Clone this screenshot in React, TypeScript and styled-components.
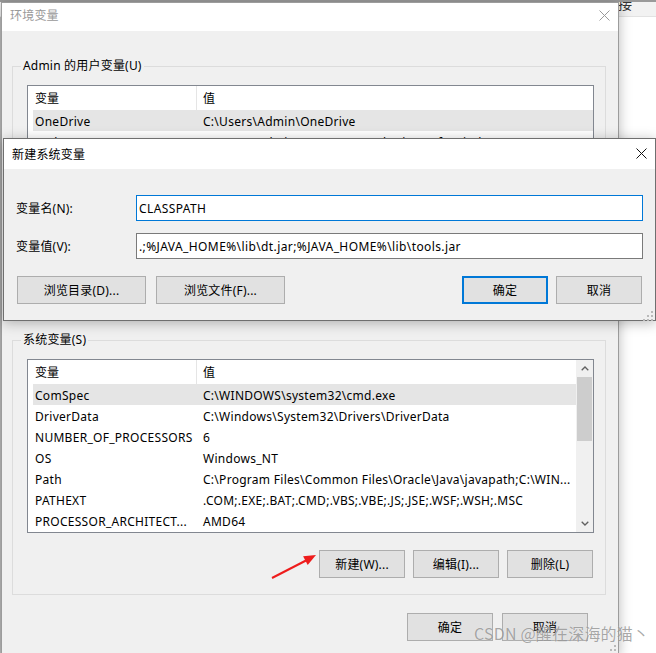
import React from "react";
import styled, { createGlobalStyle } from "styled-components";

const GlobalStyle = createGlobalStyle`
  html, body { margin: 0; padding: 0; background: #ffffff; }
  body {
    font-family: "Noto Sans", "Noto Sans CJK SC", sans-serif;
    font-size: 12px;
    color: #000;
  }
  * { box-sizing: border-box; }
`;

const Desktop = styled.div`
  position: relative;
  width: 656px;
  height: 653px;
  overflow: hidden;
  background: linear-gradient(to right, #bdbdbd 0 1px, #ffffff 1px);
`;

const BackTopBar = styled.div`
  height: 17px;
  background: #f2f2f2;
  border-top: 2px solid #9a9a9a;
  border-bottom: 1px solid #e2e2e2;
  display: flex;
  padding-left: 618px;
  overflow: hidden;
`;

const BackText = styled.span`
  font-family: "Noto Sans CJK SC", sans-serif;
  font-size: 14px;
  line-height: 14px;
  margin-top: -6px;
  color: #333;
`;

const Window = styled.div<{ $left: number; $top: number; $width: number; $height: number; $active?: boolean }>`
  position: absolute;
  left: ${(p) => p.$left}px;
  top: ${(p) => p.$top}px;
  width: ${(p) => p.$width}px;
  height: ${(p) => p.$height}px;
  display: flex;
  flex-direction: column;
  background: #f0f0f0;
  border: 1px solid ${(p) => (p.$active ? "#6f6f6f" : "#9c9c9c")};
  box-shadow: 0 2px 12px rgba(0, 0, 0, 0.28);
`;

const TitleBar = styled.div<{ $height: number }>`
  height: ${(p) => p.$height}px;
  flex-shrink: 0;
  background: #ffffff;
  display: flex;
  align-items: stretch;
  padding-left: 8px;
`;

const TitleText = styled.div<{ $active?: boolean; $lift: number }>`
  flex: 1;
  display: flex;
  align-items: center;
  padding-bottom: ${(p) => p.$lift}px;
  font-family: "Noto Sans CJK SC", sans-serif;
  font-size: 12px;
  letter-spacing: 0.2px;
  color: ${(p) => (p.$active ? "#000" : "#999")};
`;

const CloseButton = styled.div<{ $top: number }>`
  width: 28px;
  flex-shrink: 0;
  display: flex;
  justify-content: center;
  align-items: flex-start;
  padding-top: ${(p) => p.$top}px;
`;

const CloseIcon = ({ color }: { color: string }) => (
  <svg width="11" height="11" viewBox="0 0 11 11">
    <path d="M0.5 0.5 L10.5 10.5 M10.5 0.5 L0.5 10.5" stroke={color} strokeWidth="1" fill="none" />
  </svg>
);

const Grip = styled.div`
  position: absolute;
  right: 2px;
  bottom: 2px;
  width: 10px;
  height: 10px;
`;

const GripIcon = () => (
  <svg width="10" height="10" viewBox="0 0 10 10">
    {[
      [8, 0],
      [8, 4],
      [4, 4],
      [8, 8],
      [4, 8],
      [0, 8],
    ].map(([x, y], i) => (
      <rect key={i} x={x} y={y} width="2" height="2" fill="#b9b9b9" />
    ))}
  </svg>
);

const OuterBody = styled.div`
  flex: 1;
  display: flex;
  flex-direction: column;
  padding: 27px 12px 0 10px;
`;

const Group = styled.fieldset<{ $gapTop?: number }>`
  margin: ${(p) => p.$gapTop ?? 0}px 0 0 0;
  padding: 11px 11px 16px 14px;
  border: 1px solid #dcdcdc;
  min-width: 0;
  display: flex;
  flex-direction: column;
`;

const Legend = styled.legend`
  padding: 0 2px;
  margin-left: -6px;
  font-size: 12px;
  line-height: 16px;
  letter-spacing: 0.2px;
`;

const ListBox = styled.div<{ $height: number }>`
  display: flex;
  height: ${(p) => p.$height}px;
  flex-shrink: 0;
  border: 1px solid #828790;
  background: #ffffff;
  overflow: hidden;
`;

const ListContent = styled.div`
  flex: 1;
  min-width: 0;
  padding-left: 5px;
  display: flex;
  flex-direction: column;
  overflow: hidden;
`;

const HeaderRow = styled.div`
  display: grid;
  grid-template-columns: 163px 379px;
  height: 24px;
  flex-shrink: 0;
`;

const HeaderCell = styled.div<{ $divider?: boolean }>`
  display: flex;
  align-items: center;
  padding-left: ${(p) => (p.$divider ? 6 : 2)}px;
  border-left: ${(p) => (p.$divider ? "1px solid #e5e5e5" : "none")};
  white-space: nowrap;
`;

const DataRow = styled.div<{ $selected?: boolean }>`
  display: grid;
  grid-template-columns: 163px 379px;
  height: 21px;
  flex-shrink: 0;
  background: ${(p) => (p.$selected ? "#e5e5e5" : "transparent")};
`;

const Cell = styled.div<{ $value?: boolean }>`
  display: flex;
  align-items: center;
  padding-left: ${(p) => (p.$value ? 7 : 2)}px;
  padding-top: 1px;
  white-space: nowrap;
  overflow: hidden;
  letter-spacing: 0.28px;
`;

const ScrollBar = styled.div`
  width: 17px;
  flex-shrink: 0;
  background: #f0f0f0;
  display: flex;
  flex-direction: column;
`;

const ScrollArrow = styled.div`
  height: 17px;
  flex-shrink: 0;
  display: flex;
  align-items: center;
  justify-content: center;
`;

const ScrollTrack = styled.div`
  flex: 1;
  padding: 0 1px;
`;

const ScrollThumb = styled.div`
  height: 64px;
  background: #cdcdcd;
`;

const Chevron = ({ down }: { down?: boolean }) => (
  <svg width="8" height="5" viewBox="0 0 8 5">
    <path
      d={down ? "M0.7 0.7 L4 4 L7.3 0.7" : "M0.7 4.3 L4 1 L7.3 4.3"}
      stroke="#606060"
      strokeWidth="1.3"
      fill="none"
    />
  </svg>
);

const ButtonRow = styled.div<{ $top: number; $right: number; $gap: number }>`
  display: flex;
  justify-content: flex-end;
  gap: ${(p) => p.$gap}px;
  margin-top: ${(p) => p.$top}px;
  padding-right: ${(p) => p.$right}px;
  flex-shrink: 0;
`;

const Button = styled.div<{ $width: number; $default?: boolean }>`
  width: ${(p) => p.$width}px;
  height: 28px;
  flex-shrink: 0;
  display: flex;
  align-items: center;
  justify-content: center;
  background: #e1e1e1;
  border: ${(p) => (p.$default ? "2px solid #0078d7" : "1px solid #adadad")};
  font-size: 12px;
  letter-spacing: 0.2px;
  color: #000;
  white-space: nowrap;
`;

const DialogBody = styled.div`
  flex: 1;
  display: flex;
  flex-direction: column;
  padding: 26px 12px 0 12px;
`;

const FieldRow = styled.div<{ $top: number }>`
  display: grid;
  grid-template-columns: 120px 1fr;
  align-items: center;
  height: 26px;
  margin-top: ${(p) => p.$top}px;
`;

const FieldLabel = styled.div`
  font-size: 12px;
  letter-spacing: 0.2px;
  white-space: nowrap;
`;

const TextBox = styled.input<{ $focused?: boolean }>`
  height: 26px;
  width: 100%;
  margin: 0;
  padding: 0 2px;
  border: 1px solid ${(p) => (p.$focused ? "#0078d7" : "#7a7a7a")};
  background: #ffffff;
  font-family: inherit;
  font-size: 12px;
  letter-spacing: 0.4px;
  color: #000;
  outline: none;
`;

const DialogButtons = styled.div`
  display: flex;
  align-items: center;
  margin-top: 17px;
  padding: 0 1px;
`;

const ButtonGroup = styled.div<{ $gap: number }>`
  display: flex;
  gap: ${(p) => p.$gap}px;
`;

const Spacer = styled.div`
  flex: 1;
`;

const ArrowOverlay = styled.svg`
  position: absolute;
  left: 264px;
  top: 546px;
`;

const Watermark = styled.div`
  position: absolute;
  left: 474px;
  top: 622px;
  font-family: "Noto Sans CJK SC", sans-serif;
  font-size: 16px;
  line-height: 22px;
  letter-spacing: 0.2px;
  color: rgba(110, 110, 110, 0.6);
  text-shadow: 0 0 1px rgba(255, 255, 255, 0.7);
  white-space: nowrap;
`;

type Row = { name: string; value: string; selected?: boolean };

const userRows: Row[] = [
  { name: "OneDrive", value: "C:\\Users\\Admin\\OneDrive", selected: true },
  { name: "Path", value: "C:\\Users\\Admin\\AppData\\Local\\Microsoft\\WindowsApps;" },
  { name: "TEMP", value: "C:\\Users\\Admin\\AppData\\Local\\Temp" },
  { name: "TMP", value: "C:\\Users\\Admin\\AppData\\Local\\Temp" },
];

const systemRows: Row[] = [
  { name: "ComSpec", value: "C:\\WINDOWS\\system32\\cmd.exe", selected: true },
  { name: "DriverData", value: "C:\\Windows\\System32\\Drivers\\DriverData" },
  { name: "NUMBER_OF_PROCESSORS", value: "6" },
  { name: "OS", value: "Windows_NT" },
  { name: "Path", value: "C:\\Program Files\\Common Files\\Oracle\\Java\\javapath;C:\\WIN..." },
  { name: "PATHEXT", value: ".COM;.EXE;.BAT;.CMD;.VBS;.VBE;.JS;.JSE;.WSF;.WSH;.MSC" },
  { name: "PROCESSOR_ARCHITECT...", value: "AMD64" },
];

const VarList = ({ rows, height, scroll }: { rows: Row[]; height: number; scroll?: boolean }) => (
  <ListBox $height={height}>
    <ListContent>
      <HeaderRow>
        <HeaderCell>变量</HeaderCell>
        <HeaderCell $divider>值</HeaderCell>
      </HeaderRow>
      {rows.map((r) => (
        <DataRow key={r.name} $selected={r.selected}>
          <Cell>{r.name}</Cell>
          <Cell $value>{r.value}</Cell>
        </DataRow>
      ))}
    </ListContent>
    {scroll && (
      <ScrollBar>
        <ScrollArrow>
          <Chevron />
        </ScrollArrow>
        <ScrollTrack>
          <ScrollThumb />
        </ScrollTrack>
        <ScrollArrow>
          <Chevron down />
        </ScrollArrow>
      </ScrollBar>
    )}
  </ListBox>
);

export default function App() {
  return (
    <>
      <GlobalStyle />
      <Desktop>
        <BackTopBar>
          <BackText>接</BackText>
        </BackTopBar>

        <Window $left={1} $top={2} $width={618} $height={653}>
          <TitleBar $height={28}>
            <TitleText $lift={5}>环境变量</TitleText>
            <CloseButton $top={7}>
              <CloseIcon color="#9a9a9a" />
            </CloseButton>
          </TitleBar>
          <OuterBody>
            <Group>
              <Legend>Admin 的用户变量(U)</Legend>
              <VarList rows={userRows} height={150} />
              <ButtonRow $top={17} $right={1} $gap={8}>
                <Button $width={86}>新建(N)...</Button>
                <Button $width={86}>编辑(E)...</Button>
                <Button $width={86}>删除(D)</Button>
              </ButtonRow>
            </Group>
            <Group $gapTop={35}>
              <Legend>系统变量(S)</Legend>
              <VarList rows={systemRows} height={174} scroll />
              <ButtonRow $top={17} $right={1} $gap={8}>
                <Button $width={86}>新建(W)...</Button>
                <Button $width={86}>编辑(I)...</Button>
                <Button $width={86}>删除(L)</Button>
              </ButtonRow>
            </Group>
            <ButtonRow $top={18} $right={18} $gap={9}>
              <Button $width={86}>确定</Button>
              <Button $width={86}>取消</Button>
            </ButtonRow>
          </OuterBody>
          <Grip>
            <GripIcon />
          </Grip>
        </Window>

        <Window $left={3} $top={138} $width={653} $height={183} $active>
          <TitleBar $height={30}>
            <TitleText $active $lift={2}>
              新建系统变量
            </TitleText>
            <CloseButton $top={9}>
              <CloseIcon color="#111" />
            </CloseButton>
          </TitleBar>
          <DialogBody>
            <FieldRow $top={0}>
              <FieldLabel>变量名(N):</FieldLabel>
              <TextBox $focused readOnly value="CLASSPATH" />
            </FieldRow>
            <FieldRow $top={12}>
              <FieldLabel>变量值(V):</FieldLabel>
              <TextBox readOnly value=".;%JAVA_HOME%\lib\dt.jar;%JAVA_HOME%\lib\tools.jar" />
            </FieldRow>
            <DialogButtons>
              <ButtonGroup $gap={10}>
                <Button $width={129}>浏览目录(D)...</Button>
                <Button $width={129}>浏览文件(F)...</Button>
              </ButtonGroup>
              <Spacer />
              <ButtonGroup $gap={8}>
                <Button $width={86} $default>
                  确定
                </Button>
                <Button $width={86}>取消</Button>
              </ButtonGroup>
            </DialogButtons>
          </DialogBody>
          <Grip>
            <GripIcon />
          </Grip>
        </Window>

        <ArrowOverlay width="56" height="36" viewBox="264 546 56 36">
          <line x1="272" y1="578" x2="306" y2="560.5" stroke="#ee1c1c" strokeWidth="2" />
          <polygon points="316,555 303.1,556.2 307.7,565" fill="#ee1c1c" />
        </ArrowOverlay>

        <Watermark>CSDN @醒在深海的猫丶</Watermark>
      </Desktop>
    </>
  );
}
